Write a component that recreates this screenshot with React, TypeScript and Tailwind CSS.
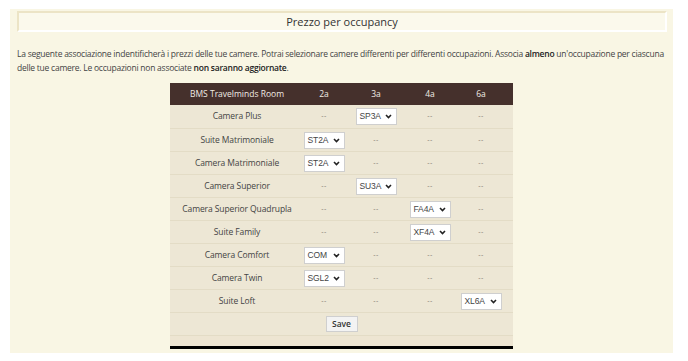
import React from 'react';

type Row = { name: string; occ: number; code: string };

const rows: Row[] = [
  { name: 'Camera Plus', occ: 1, code: 'SP3A' },
  { name: 'Suite Matrimoniale', occ: 0, code: 'ST2A' },
  { name: 'Camera Matrimoniale', occ: 0, code: 'ST2A' },
  { name: 'Camera Superior', occ: 1, code: 'SU3A' },
  { name: 'Camera Superior Quadrupla', occ: 2, code: 'FA4A' },
  { name: 'Suite Family', occ: 2, code: 'XF4A' },
  { name: 'Camera Comfort', occ: 0, code: 'COM' },
  { name: 'Camera Twin', occ: 0, code: 'SGL2' },
  { name: 'Suite Loft', occ: 3, code: 'XL6A' },
];

const Select = ({ value }: { value: string }) => (
  <div className="flex items-center justify-between w-[41px] h-[17px] bg-white border border-[#cfcfcf] pl-[3px] pr-[4px] text-[8.5px] text-[#444] font-['Liberation_Sans',sans-serif]">
    <span>{value}</span>
    <svg width="7" height="5" viewBox="0 0 7 5">
      <path d="M1 1l2.5 2.5L6 1" fill="none" stroke="#222" strokeWidth={1.6} />
    </svg>
  </div>
);

const Dash = () => <span className="text-[7px] tracking-[0.5px] text-[#8a8577] font-['Liberation_Sans',sans-serif]">--</span>;

const App: React.FC = () => {
  return (
    <div className="w-[688px] h-[361px] bg-white pt-[9px] pl-[10px] font-['Open_Sans',sans-serif]">
      <div className="w-[663px] h-[344px] bg-[#f9f6e4] pt-[2px] px-[7px]">
        {/* Title box */}
        <div className="h-[21px] w-[650px] bg-[#fbf9ec] border-t-2 border-l-2 border-t-[#ece4c6] border-l-[#ece4c6] border-b-2 border-r-2 border-b-white border-r-white flex items-center justify-center">
          <h1 className="text-[11px] text-[#333] leading-none">Prezzo per occupancy</h1>
        </div>

        {/* Description */}
        <p className="mt-[15px] text-[8.5px] leading-[14px] text-[#444] tracking-[-0.24px]">
          <span className="whitespace-nowrap">
            La seguente associazione indentificherà i prezzi delle tue camere. Potrai selezionare camere differenti per differenti occupazioni. Associa <b className="font-semibold text-[#222]">almeno</b> un'occupazione per ciascuna
          </span>
          <br />
          delle tue camere. Le occupazioni non associate <b className="font-semibold text-[#222]">non saranno aggiornate</b>.
        </p>

        {/* Table */}
        <div className="mt-[8px] ml-[153px] w-[343px]">
          <div className="h-[22px] bg-[#45302c] grid grid-cols-[128px_52px_52px_56px_46px] pr-[9px] items-center text-[8.5px] text-[#f0ebe4]">
            <div className="pl-[6px] text-center">BMS Travelminds Room</div>
            <div className="text-center">2a</div>
            <div className="text-center">3a</div>
            <div className="text-center">4a</div>
            <div className="text-center">6a</div>
          </div>
          <div className="bg-[#ede7d5]">
            {rows.map((r, i) => (
              <div
                key={r.name}
                className={`h-[23px] grid grid-cols-[128px_52px_52px_56px_46px] pr-[9px] items-center text-[8.5px] text-[#444] tracking-[-0.1px] ${i > 0 ? 'border-t border-[#e3dcc6]' : ''}`}
              >
                <div className="pl-[6px] text-center">{r.name}</div>
                {[0, 1, 2, 3].map((c) => (
                  <div key={c} className="flex justify-center">
                    {c === r.occ ? <Select value={r.code} /> : <Dash />}
                  </div>
                ))}
              </div>
            ))}
            <div className="h-[23px] border-t border-[#e3dcc6] flex items-center justify-center">
              <button className="h-[16px] w-[32px] bg-[#f3f3f3] border border-[#cfcfcf] text-[8.5px] font-semibold text-[#333] leading-none">
                Save
              </button>
            </div>
            <div className="h-[11px] border-t border-[#e3dcc6] bg-[#ede5d2]" />
          </div>
          <div className="h-[3px] bg-black" />
        </div>
      </div>
    </div>
  );
};

export default App;
